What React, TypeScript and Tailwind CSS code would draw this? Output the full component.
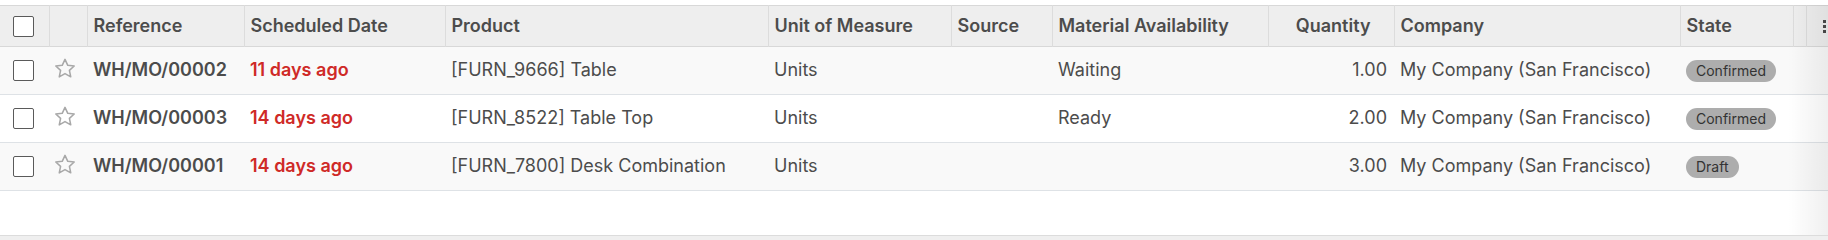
import React from 'react'

type Row = {
  ref: string
  date: string
  product: string
  uom: string
  source: string
  availability: string
  qty: string
  company: string
  state: string
}

const rows: Row[] = [
  {
    ref: 'WH/MO/00002',
    date: '11 days ago',
    product: '[FURN_9666] Table',
    uom: 'Units',
    source: '',
    availability: 'Waiting',
    qty: '1.00',
    company: 'My Company (San Francisco)',
    state: 'Confirmed',
  },
  {
    ref: 'WH/MO/00003',
    date: '14 days ago',
    product: '[FURN_8522] Table Top',
    uom: 'Units',
    source: '',
    availability: 'Ready',
    qty: '2.00',
    company: 'My Company (San Francisco)',
    state: 'Confirmed',
  },
  {
    ref: 'WH/MO/00001',
    date: '14 days ago',
    product: '[FURN_7800] Desk Combination',
    uom: 'Units',
    source: '',
    availability: '',
    qty: '3.00',
    company: 'My Company (San Francisco)',
    state: 'Draft',
  },
]

const Checkbox = () => (
  <span className="block w-[21px] h-[21px] rounded-[2px] border-[1.5px] border-[#5a5a5a] bg-white" />
)

const Star = () => (
  <svg width="24" height="23" viewBox="0 0 24 24" fill="none" stroke="#a8a8a8" strokeWidth="1.6" strokeLinejoin="round">
    <path d="M12 2.5l2.9 6.2 6.7.7-5 4.6 1.4 6.7L12 17.3l-6 3.4 1.4-6.7-5-4.6 6.7-.7z" />
  </svg>
)

const th = 'border-l border-[#dcdcdc] pl-[6px] pr-2 pb-[2px] text-left font-semibold'
const td = 'pl-[6px] pb-[2px]'

const App = () => {
  return (
    <div
      className="relative w-[1828px] h-[240px] overflow-hidden bg-white text-[#4c4c4c]"
      style={{ fontFamily: 'Inter, Roboto, sans-serif' }}
    >
      <div className="pt-[5px] h-[235px] overflow-hidden">
        <table className="table-fixed border-collapse w-[1846px] text-[18px]">
          <colgroup>
            <col className="w-[49px]" />
            <col className="w-[38px]" />
            <col className="w-[157px]" />
            <col className="w-[201px]" />
            <col className="w-[323px]" />
            <col className="w-[183px]" />
            <col className="w-[101px]" />
            <col className="w-[216px]" />
            <col className="w-[126px]" />
            <col className="w-[286px]" />
            <col className="w-[113px]" />
            <col className="w-[13px]" />
            <col className="w-[40px]" />
          </colgroup>
          <thead>
            <tr className="h-[41px] bg-[#eeeeee] border-t border-b border-[#d8d8d8]">
              <th className="pl-[13px]">
                <Checkbox />
              </th>
              <th className={th}></th>
              <th className={th}>Reference</th>
              <th className={th}>Scheduled Date</th>
              <th className={th}>Product</th>
              <th className={th}>Unit of Measure</th>
              <th className={th}>Source</th>
              <th className={th}>Material Availability</th>
              <th className="border-l border-[#dcdcdc] pr-[23px] pb-[2px] text-right font-semibold">Quantity</th>
              <th className={th}>Company</th>
              <th className={th}>State</th>
              <th className={th}></th>
              <th className="border-l border-[#dcdcdc] pl-[15px]">
                <svg width="16" height="16" viewBox="0 0 16 16" fill="#4a4a4a">
                  <rect x="1" y="2" width="3" height="3" />
                  <rect x="1" y="7" width="3" height="3" />
                  <rect x="1" y="12" width="3" height="3" />
                </svg>
              </th>
            </tr>
          </thead>
          <tbody>
            {rows.map((r, i) => (
              <tr
                key={r.ref}
                className={`h-[48px] border-b border-[#dee2e6] ${i % 2 === 0 ? 'bg-[#f9f9f9]' : 'bg-white'}`}
              >
                <td className="pl-[13px]">
                  <Checkbox />
                </td>
                <td className="pl-[4px] pb-[4px]">
                  <Star />
                </td>
                <td className={`${td} font-semibold`}>{r.ref}</td>
                <td className={`${td} font-semibold text-[#cf2a27]`}>{r.date}</td>
                <td className={td}>{r.product}</td>
                <td className={td}>{r.uom}</td>
                <td className={td}>{r.source}</td>
                <td className={td}>{r.availability}</td>
                <td className="pr-[7px] pb-[2px] text-right">{r.qty}</td>
                <td className={td}>{r.company}</td>
                <td className={td}>
                  <span className="inline-block rounded-full bg-[#adadad] px-[10px] py-[1px] text-[14px] leading-[20px] text-[#333]">
                    {r.state}
                  </span>
                </td>
                <td></td>
                <td></td>
              </tr>
            ))}
          </tbody>
        </table>
      </div>
      <div className="h-[5px] border-t border-[#dcdcdc] bg-[#efefef]" />
      <div className="pointer-events-none absolute right-0 top-[5px] h-[230px] w-[40px] bg-gradient-to-r from-transparent to-black/[0.06]" />
    </div>
  )
}

export default App
